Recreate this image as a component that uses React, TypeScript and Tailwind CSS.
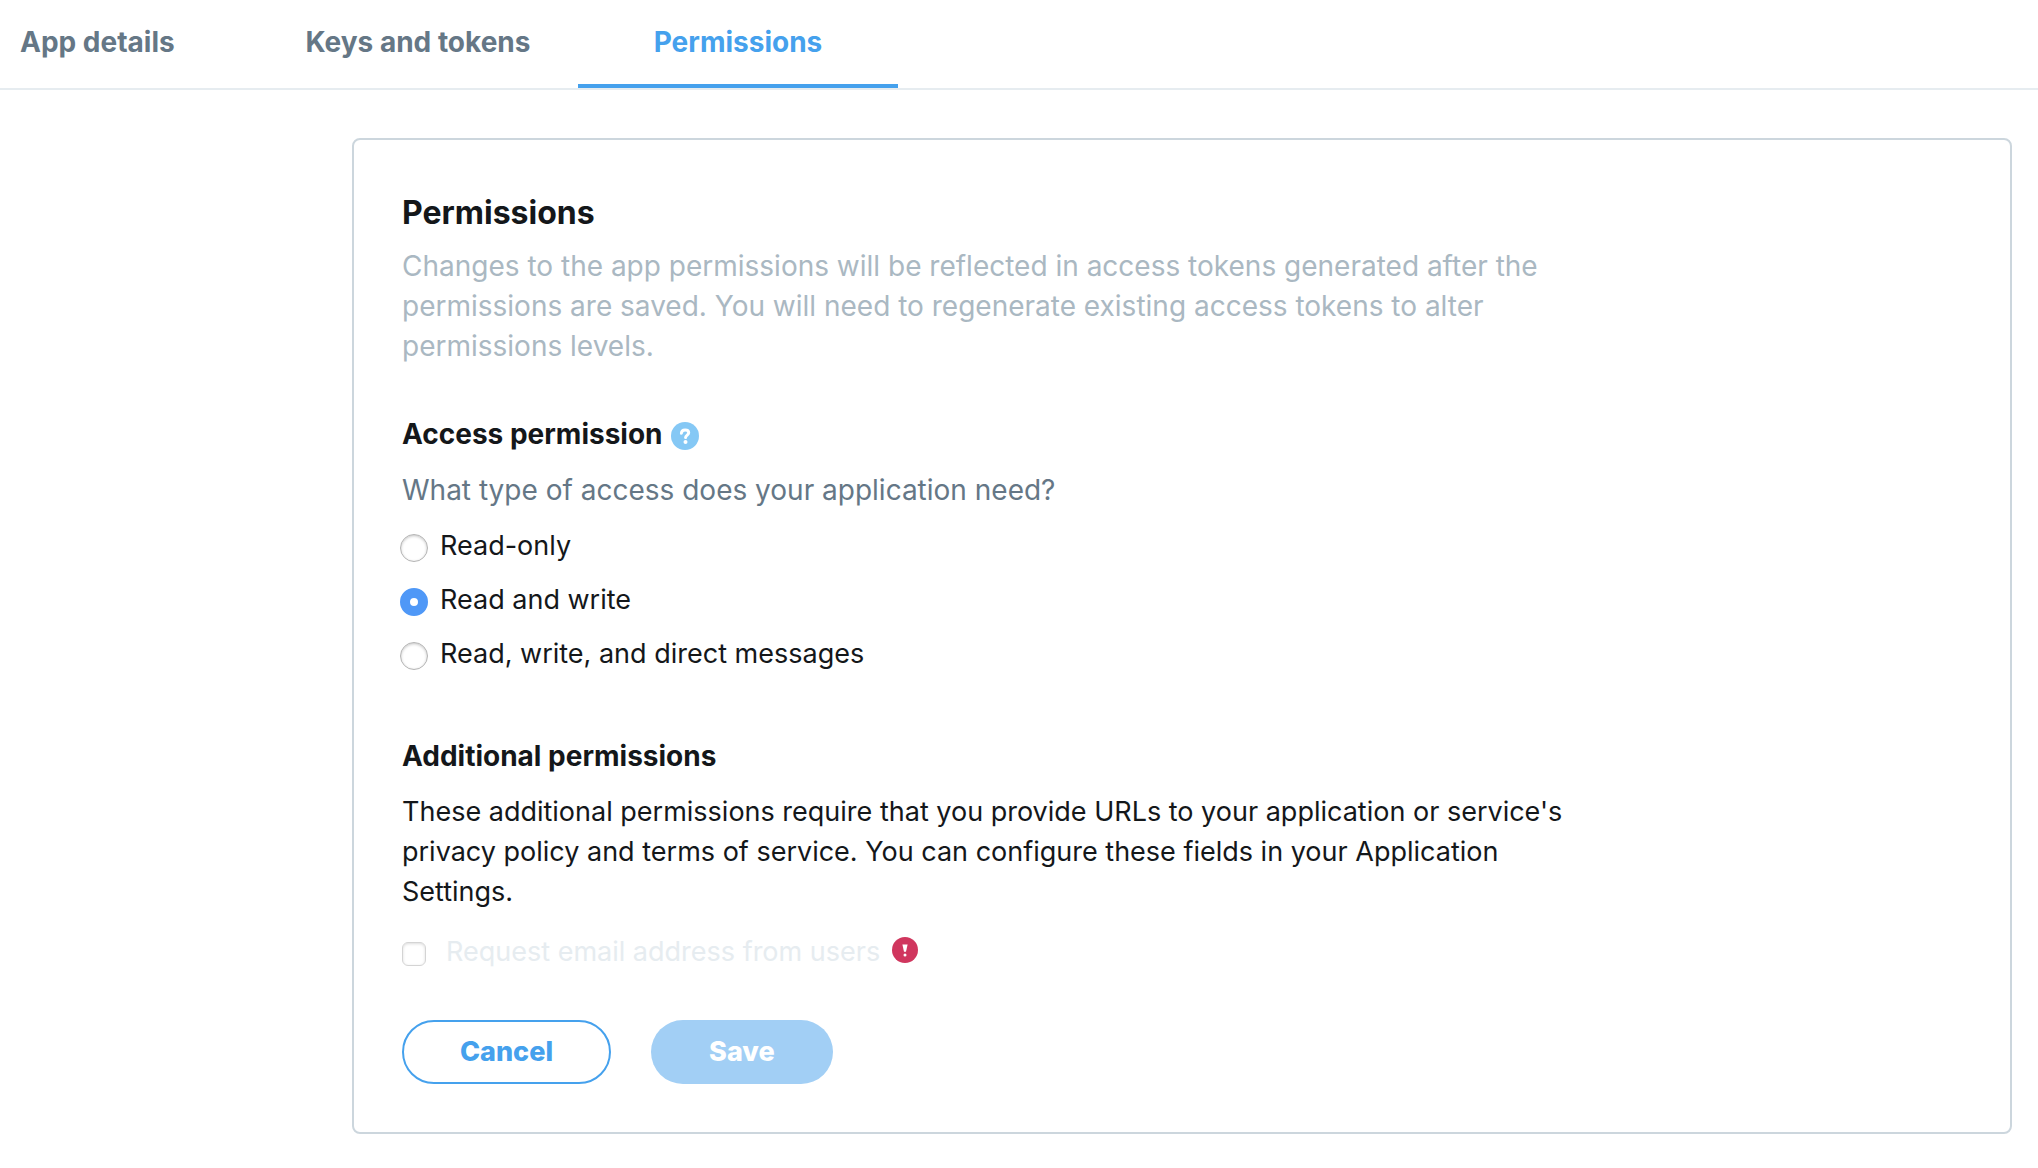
import React, { useState } from "react";

const tabs = ["App details", "Keys and tokens", "Permissions"];

const accessLevels = [
  { value: "read", label: "Read-only" },
  { value: "read-write", label: "Read and write" },
  { value: "read-write-dm", label: "Read, write, and direct messages" },
];

function Tabs() {
  return (
    <nav className="flex h-[90px] border-b-2 border-[#e6ecf0] text-[28px] leading-10 font-bold">
      {tabs.map((tab, index) => {
        const active = tab === "Permissions";
        return (
          <a
            key={tab}
            href="#"
            aria-current={active ? "page" : undefined}
            className={`pt-[22px] ${index === 0 ? "w-[258px] pl-5" : "w-80 text-center"} ${
              active ? "border-b-4 border-[#45a1ed] text-[#45a1ed]" : "text-[#657786]"
            }`}
          >
            {tab}
          </a>
        );
      })}
    </nav>
  );
}

function HelpIcon() {
  return (
    <svg viewBox="0 0 28 28" className="size-7" aria-hidden="true">
      <circle cx="14" cy="14" r="14" fill="#85c8f5" />
      <path
        d="M10.4 11.2c.1-2.2 1.6-3.3 3.7-3.3s3.6 1.1 3.6 2.9c0 2.2-3.1 2.4-3.1 4.8"
        fill="none"
        stroke="#fff"
        strokeWidth="3"
        strokeLinecap="round"
      />
      <circle cx="14.5" cy="20" r="2" fill="#fff" />
    </svg>
  );
}

function AlertIcon() {
  return (
    <svg viewBox="0 0 26 26" className="size-[26px]" aria-hidden="true">
      <circle cx="13" cy="13" r="13" fill="#d0365e" />
      <path d="M10.4 7.4h5.2l-1.6 7.4h-2z" fill="#fff" />
      <circle cx="13" cy="17.9" r="1.5" fill="#fff" />
    </svg>
  );
}

export default function App() {
  const [access, setAccess] = useState("read-write");

  return (
    <div className="min-h-screen bg-white font-['Inter',sans-serif] text-[27px] leading-10 text-[#14171a]">
      <Tabs />
      <main className="mt-12 mr-[26px] ml-[352px] rounded-lg border-2 border-[#ccd6dd] p-12">
        <form onSubmit={(e) => e.preventDefault()} className="max-w-[1190px]">
          <h1 className="text-[32px] leading-[50px] font-bold">Permissions</h1>
          <p className="mt-2 text-[28px] text-[#aab8c2]">
            Changes to the app permissions will be reflected in access tokens generated after the
            permissions are saved. You will need to regenerate existing access tokens to alter
            permissions levels.
          </p>

          <div className="mt-12 flex items-center gap-2">
            <h2 className="text-[28px] font-bold">Access permission</h2>
            <button type="button" aria-label="Help" className="mt-1">
              <HelpIcon />
            </button>
          </div>
          <fieldset className="mt-4">
            <legend className="text-[28px] text-[#657786]">
              What type of access does your application need?
            </legend>
            <div className="mt-4 -ml-[2px] flex flex-col items-start gap-[14px]">
              {accessLevels.map((level) => (
                <label key={level.value} className="flex items-center gap-3">
                  <input
                    type="radio"
                    name="access"
                    value={level.value}
                    checked={access === level.value}
                    onChange={() => setAccess(level.value)}
                    className="mt-1 size-7 appearance-none rounded-full border border-[#b4b4b4] bg-white shadow-[inset_0_1px_3px_#c4c4c4] checked:border-[10px] checked:border-[#4f98f7] checked:shadow-none"
                  />
                  {level.label}
                </label>
              ))}
            </div>
          </fieldset>

          <h2 className="mt-[62px] text-[28px] font-bold">Additional permissions</h2>
          <p className="mt-4">
            These additional permissions require that you provide URLs to your application or
            service's privacy policy and terms of service. You can configure these fields in your
            Application Settings.
          </p>

          <div className="mt-5 flex items-center">
            <label className="flex items-center gap-5 text-[#e6ecf0]">
              <input
                type="checkbox"
                disabled
                className="mt-1 size-6 appearance-none rounded-md border border-[#d4d4d4] bg-white shadow-[inset_0_1px_3px_#dcdcdc]"
              />
              Request email address from users
            </label>
            <span className="mb-1 ml-3">
              <AlertIcon />
            </span>
          </div>

          <div className="mt-12 flex gap-10 font-extrabold">
            <button
              type="button"
              className="h-16 rounded-full border-2 border-[#45a1ed] px-14 text-[#45a1ed]"
            >
              Cancel
            </button>
            <button type="submit" disabled className="h-16 rounded-full bg-[#a2cff5] px-[58px] text-white">
              Save
            </button>
          </div>
        </form>
      </main>
    </div>
  );
}
